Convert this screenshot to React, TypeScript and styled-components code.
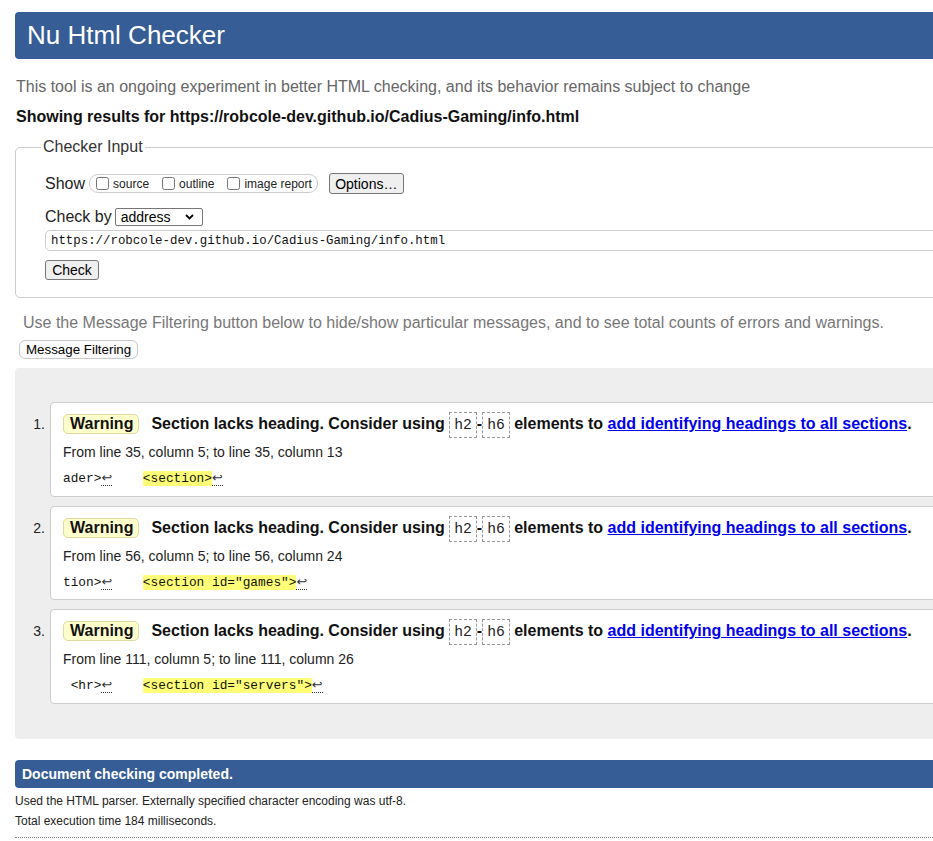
import React from "react";
import styled, { createGlobalStyle } from "styled-components";

const Global = createGlobalStyle`
  html, body { margin: 0; padding: 0; overflow: hidden; background: #fff; }
  body { font-family: "Liberation Sans", Arial, sans-serif; color: #222; }
`;

const Page = styled.div`
  width: 1000px;
  padding: 12px 0 0 15px;
`;

const Header = styled.h1`
  margin: 0;
  height: 47px;
  line-height: 47px;
  background: #365d95;
  color: #fff;
  font-size: 26px;
  font-weight: normal;
  padding-left: 12px;
  border-radius: 4px;
`;

const Intro = styled.p`
  margin: 18px 0 0 1px;
  font-size: 16px;
  line-height: 20px;
  color: #666;
`;

const ResultsFor = styled.p`
  margin: 10px 0 0 1px;
  font-size: 16px;
  line-height: 20px;
  font-weight: bold;
  color: #111;
`;

const Fieldset = styled.fieldset`
  margin: 11px 0 0 0;
  padding: 0 0 17px 29px;
  border: 1px solid #ccc;
  border-radius: 5px;
  min-width: 0;
`;

const Legend = styled.legend`
  margin-left: -4px;
  padding: 0 2px;
  font-size: 16px;
  line-height: 18px;
  color: #333;
`;

const ControlRow = styled.div<{ $top: number }>`
  display: flex;
  align-items: center;
  margin-top: ${(p) => p.$top}px;
`;

const FieldLabel = styled.span`
  font-size: 16px;
  color: #222;
  margin-right: 3px;
`;

const Pill = styled.div`
  display: flex;
  align-items: center;
  height: 19px;
  box-sizing: border-box;
  border: 1px solid #ccc;
  border-radius: 9px;
  padding: 0 5px 0 6px;
  margin-left: 1px;
  gap: 13px;
`;

const CheckLabel = styled.label`
  display: flex;
  align-items: center;
  font-size: 12px;
  color: #222;
`;

const Box = styled.input`
  margin: 0 4px 0 0;
  width: 13px;
  height: 13px;
`;

const Button = styled.button<{ $w: number; $h: number }>`
  width: ${(p) => p.$w}px;
  height: ${(p) => p.$h}px;
  box-sizing: border-box;
  padding: 0;
  font-family: "Liberation Sans", Arial, sans-serif;
  font-size: 14px;
  color: #000;
  background: #efefef;
  border: 1px solid #767676;
  border-radius: 3px;
`;

const OptionsButton = styled(Button)`
  margin-left: 11px;
`;

const Select = styled.div`
  display: flex;
  align-items: center;
  justify-content: space-between;
  width: 88px;
  height: 18px;
  box-sizing: border-box;
  border: 1px solid #767676;
  border-radius: 2px;
  padding: 0 8px 0 5px;
  font-size: 14px;
  color: #000;
`;

const UrlInput = styled.input`
  display: block;
  margin-top: 4px;
  width: 100%;
  height: 21px;
  box-sizing: border-box;
  border: 1px solid #ccc;
  border-radius: 5px;
  padding: 0 5px;
  font-family: "Liberation Mono", monospace;
  font-size: 12.4px;
  color: #111;
  background: #fff;
  outline: none;
`;

const CheckButton = styled(Button)`
  display: block;
  margin-top: 9px;
`;

const FilterNote = styled.p`
  margin: 15px 0 0 8px;
  font-size: 16px;
  line-height: 20px;
  color: #777;
`;

const FilterButton = styled.button`
  display: block;
  margin: 7px 0 0 4px;
  height: 19px;
  box-sizing: border-box;
  padding: 0 6px;
  font-family: "Liberation Sans", Arial, sans-serif;
  font-size: 13.33px;
  color: #000;
  background: #fbfbfb;
  border: 1px solid #c8c8c8;
  border-radius: 6px;
`;

const Results = styled.ol`
  margin: 9px 0 0 0;
  padding: 34px 0 35.5px 15px;
  background: #eee;
  border-radius: 4px;
  list-style: none;
`;

const Item = styled.li`
  display: flex;
  align-items: baseline;
  & + & { margin-top: 9px; }
`;

const Num = styled.span`
  width: 20px;
  flex: none;
  box-sizing: border-box;
  padding-right: 5px;
  text-align: right;
  font-size: 14px;
  color: #222;
`;

const Message = styled.div`
  flex: 1;
  background: #fff;
  border: 1px solid #ccc;
  border-radius: 4px;
  padding: 8px 0 6.6px 12px;
`;

const Title = styled.p`
  margin: 0;
  font-size: 16px;
  line-height: 26px;
  font-weight: bold;
  color: #111;
  white-space: nowrap;
`;

const Badge = styled.strong`
  display: inline-block;
  line-height: 18px;
  padding: 0 5px 0 6px;
  margin-right: 12px;
  background: #ffc;
  border: 1px solid #ddd9a0;
  border-radius: 5px;
`;

const Code = styled.code`
  display: inline-block;
  font-family: "Liberation Mono", monospace;
  font-size: 14.67px;
  font-weight: normal;
  line-height: 24px;
  padding: 0 4px;
  border: 1px dashed #999;
  color: #222;
`;

const Link = styled.a`
  color: #00e;
  text-decoration: underline;
`;

const Location = styled.p`
  margin: 5px 0 0;
  font-size: 14px;
  line-height: 18px;
  color: #222;
`;

const Extract = styled.p`
  margin: 7px 0 0;
  font-family: "Liberation Mono", monospace;
  font-size: 12.8px;
  line-height: 20px;
  white-space: pre;
  color: #111;
`;

const Mark = styled.mark`
  background: #ff7;
  color: #111;
`;

const Lf = styled.span`
  font-family: "DejaVu Sans", sans-serif;
  font-size: 12.8px;
  border-bottom: 1px dotted #333;
  color: #333;
`;

const Done = styled.div`
  margin-top: 21px;
  height: 28px;
  line-height: 28px;
  background: #365d95;
  color: #fff;
  font-size: 14px;
  font-weight: bold;
  padding-left: 7px;
  border-radius: 4px;
`;

const Footnote = styled.p<{ $top: number }>`
  margin: ${(p) => p.$top}px 0 0;
  font-size: 12px;
  line-height: 20px;
  color: #222;
`;

const Rule = styled.hr`
  margin: 6px 0 0;
  border: 0;
  border-top: 1px dotted #888;
`;

const Chevron = () => (
  <svg width="9" height="6" viewBox="0 0 9 6" aria-hidden>
    <path d="M1 1l3.5 3.5L8 1" fill="none" stroke="#000" strokeWidth="1.8" />
  </svg>
);

type Msg = { from: number; col1: number; col2: number; before: string; code: string };

const messages: Msg[] = [
  { from: 35, col1: 5, col2: 13, before: "ader>", code: "<section>" },
  { from: 56, col1: 5, col2: 24, before: "tion>", code: '<section id="games">' },
  { from: 111, col1: 5, col2: 26, before: " <hr>", code: '<section id="servers">' },
];

export default function App() {
  return (
    <Page>
      <Global />
      <Header>Nu Html Checker</Header>
      <Intro>
        This tool is an ongoing experiment in better HTML checking, and its behavior remains subject to change
      </Intro>
      <ResultsFor>Showing results for https://robcole-dev.github.io/Cadius-Gaming/info.html</ResultsFor>
      <Fieldset>
        <Legend>Checker Input</Legend>
        <ControlRow $top={17}>
          <FieldLabel>Show</FieldLabel>
          <Pill>
            <CheckLabel>
              <Box type="checkbox" />
              source
            </CheckLabel>
            <CheckLabel>
              <Box type="checkbox" />
              outline
            </CheckLabel>
            <CheckLabel>
              <Box type="checkbox" />
              image report
            </CheckLabel>
          </Pill>
          <OptionsButton $w={75} $h={21}>Options…</OptionsButton>
        </ControlRow>
        <ControlRow $top={14}>
          <FieldLabel>Check by</FieldLabel>
          <Select>
            address
            <Chevron />
          </Select>
        </ControlRow>
        <UrlInput readOnly value="https://robcole-dev.github.io/Cadius-Gaming/info.html" />
        <CheckButton $w={54} $h={20}>Check</CheckButton>
      </Fieldset>
      <FilterNote>
        Use the Message Filtering button below to hide/show particular messages, and to see total counts of errors and warnings.
      </FilterNote>
      <FilterButton>Message Filtering</FilterButton>
      <Results>
        {messages.map((m, i) => (
          <Item key={i}>
            <Num>{i + 1}.</Num>
            <Message>
              <Title>
                <Badge>Warning</Badge>
                Section lacks heading. Consider using <Code>h2</Code>-<Code>h6</Code> elements to{" "}
                <Link href="#">add identifying headings to all sections</Link>.
              </Title>
              <Location>
                From line {m.from}, column {m.col1}; to line {m.from}, column {m.col2}
              </Location>
              <Extract>
                {m.before}
                <Lf>↩</Lf>
                {"    "}
                <Mark>{m.code}</Mark>
                <Lf>↩</Lf>
              </Extract>
            </Message>
          </Item>
        ))}
      </Results>
      <Done>Document checking completed.</Done>
      <Footnote $top={3}>Used the HTML parser. Externally specified character encoding was utf-8.</Footnote>
      <Footnote $top={0}>Total execution time 184 milliseconds.</Footnote>
      <Rule />
    </Page>
  );
}
